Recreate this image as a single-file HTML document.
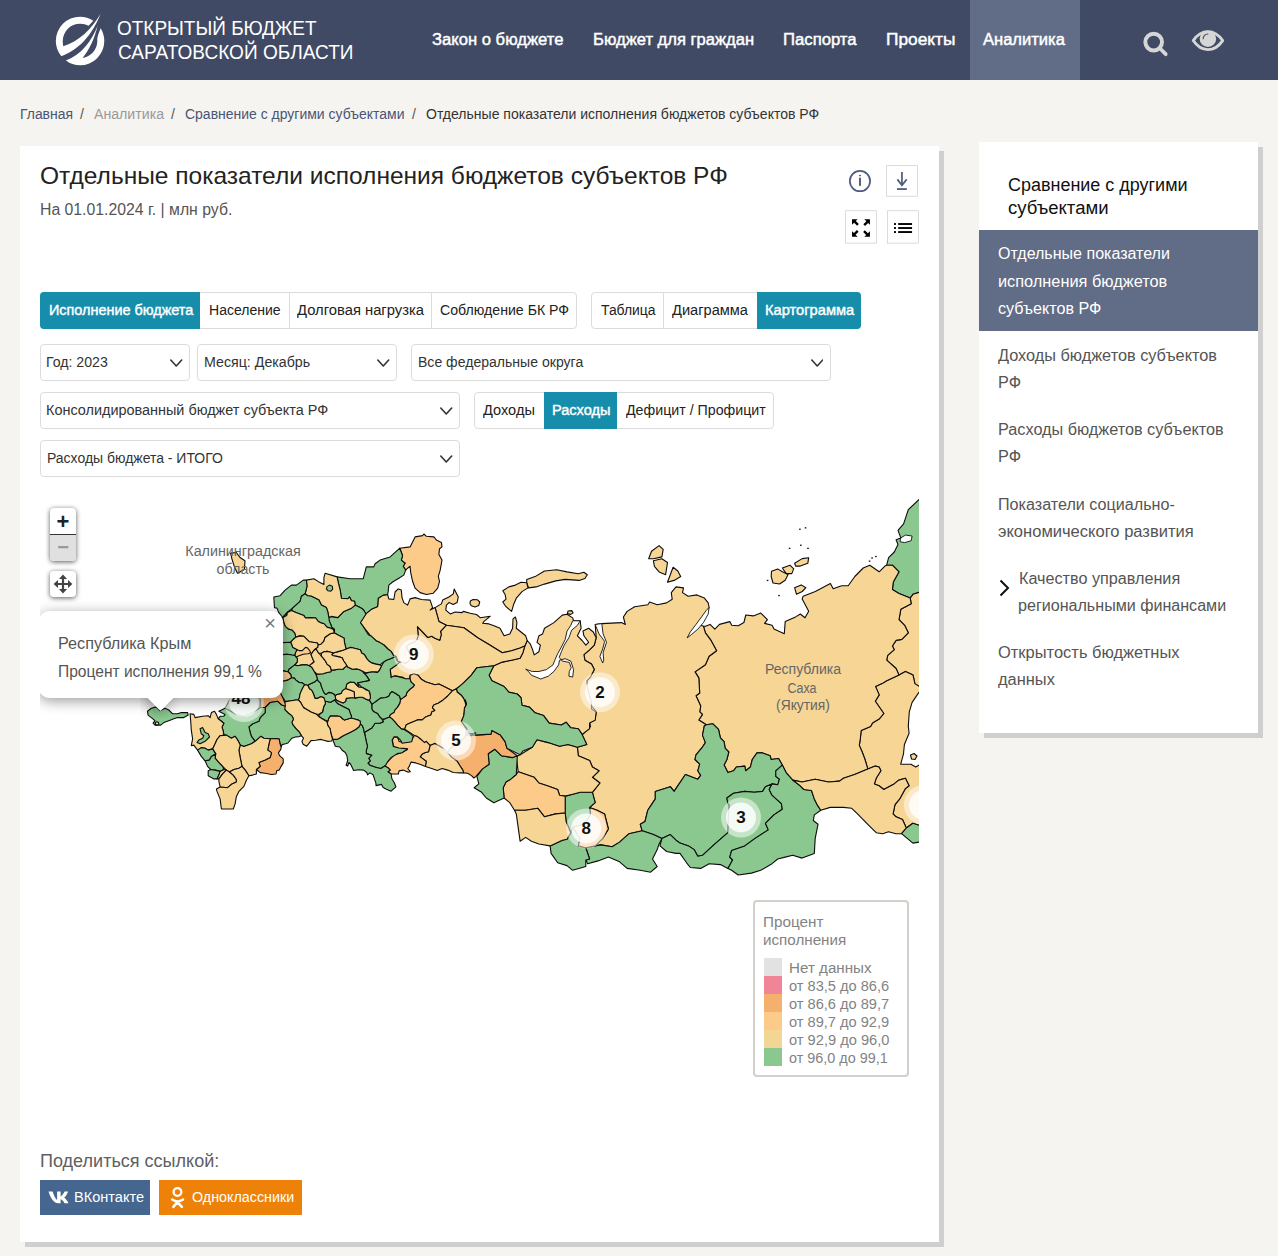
<!DOCTYPE html>
<html lang="ru"><head><meta charset="utf-8"><title>Открытый бюджет Саратовской области</title>
<style>
*{box-sizing:border-box;margin:0;padding:0}
html,body{width:1278px;height:1256px;overflow:hidden}
body{background:#f5f4f0;font-family:"Liberation Sans",sans-serif;color:#212529;position:relative}
.abs{position:absolute;white-space:nowrap}
.t{position:absolute;white-space:nowrap;line-height:1;display:block}
header{position:absolute;left:0;top:0;width:1278px;height:80px;background:#404a65}
.card{position:absolute;background:#fff;box-shadow:5px 5px 0 #cfcfcf}
.bx{position:absolute;border:1px solid #dcdcdc;background:#fff}
.on{position:absolute;background:#168eab}
</style></head><body>
<header>
<svg class="abs" style="left:48px;top:8px" width="70" height="70" viewBox="0 0 1256 1256"><g fill="#fff"><path d="M945,105 C880,260 700,700 240,865 A435,435 0 0 1 140,592 A435,435 0 0 1 575,157 A435,435 0 0 1 813,228 L730,320 A310,310 0 0 0 575,282 A310,310 0 0 0 265,592 A310,310 0 0 0 275,685 C560,600 780,380 945,105Z"/><path d="M320,940 A435,435 0 0 0 575,1027 A435,435 0 0 0 1010,592 A435,435 0 0 0 945,364 C915,440 890,500 883,560 A310,310 0 0 1 885,592 A310,310 0 0 1 620,895 C740,760 840,540 890,320 C790,580 600,850 320,940Z"/></g></svg>
<span id="t1" class="t" style="left:116.6px;top:17.6px;font-size:20.5px;color:#fff;transform:scaleX(0.9254);transform-origin:0 50%;">ОТКРЫТЫЙ БЮДЖЕТ</span>
<span id="t2" class="t" style="left:117.5px;top:41.6px;font-size:20.5px;color:#fff;transform:scaleX(0.9297);transform-origin:0 50%;">САРАТОВСКОЙ ОБЛАСТИ</span>
<div class="abs" style="left:969.5px;top:0;width:110.7px;height:80px;background:#616c86"></div>
<span id="t3" class="t" style="left:431.7px;top:32.0px;font-size:16px;color:#fff;transform:scaleX(1.0383);transform-origin:0 50%;-webkit-text-stroke:0.45px;">Закон о бюджете</span>
<span id="t4" class="t" style="left:592.7px;top:32.0px;font-size:16px;color:#fff;transform:scaleX(1.0363);transform-origin:0 50%;-webkit-text-stroke:0.45px;">Бюджет для граждан</span>
<span id="t5" class="t" style="left:783.4px;top:32.0px;font-size:16px;color:#fff;transform:scaleX(1.0432);transform-origin:0 50%;-webkit-text-stroke:0.45px;">Паспорта</span>
<span id="t6" class="t" style="left:885.6px;top:32.0px;font-size:16px;color:#fff;transform:scaleX(1.0801);transform-origin:0 50%;-webkit-text-stroke:0.45px;">Проекты</span>
<span id="t7" class="t" style="left:983.4px;top:32.0px;font-size:16px;color:#fff;transform:scaleX(1.0336);transform-origin:0 50%;-webkit-text-stroke:0.45px;">Аналитика</span>
<svg class="abs" style="left:1130px;top:15px" width="110" height="55" viewBox="0 0 1278 639"><g fill="none" stroke="#d6d6d6" stroke-linecap="round"><circle cx="275" cy="315" r="97" stroke-width="46"/><path d="M352,392 L415,455" stroke-width="44"/><path d="M735,297 C790,215 850,193 905,193 C960,193 1020,215 1077,297 C1020,380 960,402 905,402 C850,402 790,380 735,297Z" stroke-width="34" stroke-linejoin="round"/></g><circle cx="905" cy="275" r="96" fill="#d6d6d6"/><path d="M850,275 A55,55 0 0 1 905,220" fill="none" stroke="#404a65" stroke-width="13" stroke-linecap="round"/></svg>
</header>
<span id="t8" class="t" style="left:19.8px;top:107.1px;font-size:14px;color:#4a5574;transform:scaleX(0.9942);transform-origin:0 50%;">Главная</span>
<span id="t9" class="t" style="left:80.0px;top:107.1px;font-size:14px;color:#555;transform:scaleX(1.0000);transform-origin:0 50%;">/</span>
<span id="t10" class="t" style="left:93.8px;top:107.1px;font-size:14px;color:#9a9a9a;transform:scaleX(1.0104);transform-origin:0 50%;">Аналитика</span>
<span id="t11" class="t" style="left:171.0px;top:107.1px;font-size:14px;color:#555;transform:scaleX(1.0000);transform-origin:0 50%;">/</span>
<span id="t12" class="t" style="left:184.5px;top:107.1px;font-size:14px;color:#4a5574;transform:scaleX(0.9982);transform-origin:0 50%;">Сравнение с другими субъектами</span>
<span id="t13" class="t" style="left:411.9px;top:107.1px;font-size:14px;color:#555;transform:scaleX(1.0000);transform-origin:0 50%;">/</span>
<span id="t14" class="t" style="left:426.0px;top:107.1px;font-size:14px;color:#333;transform:scaleX(1.0010);transform-origin:0 50%;">Отдельные показатели исполнения бюджетов субъектов РФ</span>
<div class="card" id="main" style="left:20px;top:146px;width:919px;height:1096px">
<span id="t15" class="t" style="left:19.8px;top:17.7px;font-size:24px;color:#222;transform:scaleX(1.0215);transform-origin:0 50%;">Отдельные показатели исполнения бюджетов субъектов РФ</span>
<span id="t16" class="t" style="left:20.2px;top:55.5px;font-size:16px;color:#555;transform:scaleX(0.9866);transform-origin:0 50%;">На 01.01.2024 г. | млн руб.</span>
<svg class="abs" style="left:815px;top:9px" width="90" height="95" viewBox="0 0 1190 1256"><g fill="none" stroke="#d4d4d8" stroke-width="11"><rect x="682" y="140" width="408" height="405"/><rect x="140" y="737" width="407" height="428"/><rect x="695" y="737" width="407" height="428"/></g><g fill="none" stroke="#4f5d7e"><circle cx="330" cy="345" r="134" stroke-width="23"/><path d="M885,225 V400 M825,322 L885,400 L948,322" stroke-width="23"/><path d="M820,450 H950" stroke-width="24"/></g><g fill="#4f5d7e"><rect x="317" y="300" width="26" height="108"/><rect x="317" y="264" width="26" height="16"/></g><g fill="#000"><path d="M225,848h75l-25,25 40,40 -22,22 -40,-40 -28,28z"/><path d="M462,848v75l-25,-25 -40,40 -22,-22 40,-40 -28,-28z"/><path d="M225,1082v-75l25,25 40,-40 22,22 -40,40 28,28z"/><path d="M462,1082h-75l25,-25 -40,-40 22,-22 40,40 28,-28z"/><rect x="780" y="900" width="26" height="25"/><rect x="780" y="953" width="26" height="25"/><rect x="780" y="1006" width="26" height="25"/><rect x="835" y="900" width="184" height="25"/><rect x="835" y="953" width="184" height="25"/><rect x="835" y="1006" width="184" height="25"/></g></svg>
<div class="bx" style="left:20.0px;top:146.0px;width:537.0px;height:36.5px;border-radius:4px;"></div>
<div class="on" style="left:20.0px;top:146.0px;width:160.0px;height:36.5px;border-radius:4px 0 0 4px;"></div>
<div class="abs" style="left:269.0px;top:146.5px;width:1px;height:35.5px;background:#dcdcdc"></div>
<div class="abs" style="left:411.0px;top:146.5px;width:1px;height:35.5px;background:#dcdcdc"></div>
<span id="t17" class="t" style="left:28.8px;top:156.5px;font-size:14px;color:#fff;transform:scaleX(1.0296);transform-origin:0 50%;-webkit-text-stroke:0.39px;">Исполнение бюджета</span>
<span id="t18" class="t" style="left:189.1px;top:156.5px;font-size:14px;color:#222;transform:scaleX(1.0000);transform-origin:0 50%;">Население</span>
<span id="t19" class="t" style="left:276.8px;top:156.5px;font-size:14px;color:#222;transform:scaleX(1.0556);transform-origin:0 50%;">Долговая нагрузка</span>
<span id="t20" class="t" style="left:419.5px;top:156.5px;font-size:14px;color:#222;transform:scaleX(1.0095);transform-origin:0 50%;">Соблюдение БК РФ</span>
<div class="bx" style="left:571.0px;top:146.0px;width:270.0px;height:36.5px;border-radius:4px;"></div>
<div class="on" style="left:737.0px;top:146.0px;width:104.0px;height:36.5px;border-radius:0 4px 4px 0;"></div>
<div class="abs" style="left:643.0px;top:146.5px;width:1px;height:35.5px;background:#dcdcdc"></div>
<span id="t21" class="t" style="left:580.6px;top:156.5px;font-size:14px;color:#222;transform:scaleX(0.9944);transform-origin:0 50%;">Таблица</span>
<span id="t22" class="t" style="left:651.9px;top:156.5px;font-size:14px;color:#222;transform:scaleX(1.0433);transform-origin:0 50%;">Диаграмма</span>
<span id="t23" class="t" style="left:744.6px;top:156.5px;font-size:14px;color:#fff;transform:scaleX(1.0478);transform-origin:0 50%;-webkit-text-stroke:0.39px;">Картограмма</span>
<div class="bx" style="left:20.0px;top:198.3px;width:149.7px;height:36.4px;border-radius:4px;"></div>
<span id="t24" class="t" style="left:26.3px;top:208.8px;font-size:14px;color:#333;transform:scaleX(1.0084);transform-origin:0 50%;">Год: 2023</span>
<svg class="abs" style="left:150.2px;top:213.0px" width="12.5" height="8" viewBox="0 0 12.5 8"><path d="M0.800 1 L6.25 7 L11.7 1" fill="none" stroke="#333" stroke-width="1.6" stroke-linecap="round" stroke-linejoin="round"/></svg>
<div class="bx" style="left:177.0px;top:198.3px;width:199.5px;height:36.4px;border-radius:4px;"></div>
<span id="t25" class="t" style="left:183.8px;top:208.8px;font-size:14px;color:#333;transform:scaleX(1.0154);transform-origin:0 50%;">Месяц: Декабрь</span>
<svg class="abs" style="left:357.1px;top:213.0px" width="12.5" height="8" viewBox="0 0 12.5 8"><path d="M0.800 1 L6.25 7 L11.7 1" fill="none" stroke="#333" stroke-width="1.6" stroke-linecap="round" stroke-linejoin="round"/></svg>
<div class="bx" style="left:391.3px;top:198.3px;width:419.3px;height:36.4px;border-radius:4px;"></div>
<span id="t26" class="t" style="left:397.5px;top:208.8px;font-size:14px;color:#333;transform:scaleX(1.0037);transform-origin:0 50%;">Все федеральные округа</span>
<svg class="abs" style="left:790.8px;top:213.0px" width="12.5" height="8" viewBox="0 0 12.5 8"><path d="M0.800 1 L6.25 7 L11.7 1" fill="none" stroke="#333" stroke-width="1.6" stroke-linecap="round" stroke-linejoin="round"/></svg>
<div class="bx" style="left:20.0px;top:246.4px;width:419.6px;height:36.2px;border-radius:4px;"></div>
<span id="t27" class="t" style="left:26.3px;top:256.9px;font-size:14px;color:#333;transform:scaleX(1.0308);transform-origin:0 50%;">Консолидированный бюджет субъекта РФ</span>
<svg class="abs" style="left:420.0px;top:261.0px" width="12.5" height="8" viewBox="0 0 12.5 8"><path d="M0.800 1 L6.25 7 L11.7 1" fill="none" stroke="#333" stroke-width="1.6" stroke-linecap="round" stroke-linejoin="round"/></svg>
<div class="bx" style="left:454.3px;top:246.4px;width:299.4px;height:36.2px;border-radius:4px;"></div>
<div class="on" style="left:523.9px;top:246.4px;width:73.0px;height:36.2px;border-radius:0;"></div>
<span id="t28" class="t" style="left:462.8px;top:256.9px;font-size:14px;color:#222;transform:scaleX(1.0412);transform-origin:0 50%;">Доходы</span>
<span id="t29" class="t" style="left:531.7px;top:256.9px;font-size:14px;color:#fff;transform:scaleX(1.0403);transform-origin:0 50%;-webkit-text-stroke:0.39px;">Расходы</span>
<span id="t30" class="t" style="left:606.0px;top:256.9px;font-size:14px;color:#222;transform:scaleX(1.0146);transform-origin:0 50%;">Дефицит / Профицит</span>
<div class="bx" style="left:20.0px;top:294.2px;width:419.6px;height:36.4px;border-radius:4px;"></div>
<span id="t31" class="t" style="left:26.9px;top:304.9px;font-size:14px;color:#333;transform:scaleX(0.9977);transform-origin:0 50%;">Расходы бюджета - ИТОГО</span>
<svg class="abs" style="left:420.0px;top:309.0px" width="12.5" height="8" viewBox="0 0 12.5 8"><path d="M0.800 1 L6.25 7 L11.7 1" fill="none" stroke="#333" stroke-width="1.6" stroke-linecap="round" stroke-linejoin="round"/></svg>
<div id="map" style="position:absolute;left:20px;top:352px;width:879px;height:600px;overflow:hidden">
<svg width="879" height="600" viewBox="40 498 879 600" style="position:absolute;left:0;top:0">
<g stroke="#0c0c0c" stroke-width="1.1" stroke-linejoin="round">
<polygon points="886.7,565.2 888.6,557.7 894.3,552.0 898.0,544.5 896.1,539.8 900.8,537.9 898.0,530.4 903.6,523.8 908.3,509.7 919.1,499.4 924.3,495.6 924.3,592.4 919.1,592.4 913.0,594.3 910.2,598.1 899.0,593.4 892.4,589.6 893.3,582.1 899.0,571.8 892.4,565.2" fill="#8bc890"/>
<polygon points="900.8,537.9 905.5,535.1 912.1,536.0 911.2,540.7 904.6,542.6 899.9,541.7" fill="#fff" stroke="#111" stroke-width="0.9"/>
<polygon points="910.2,598.1 913.0,594.3 919.1,592.4 924.3,592.4 924.3,686.4 919.1,686.4 914.9,683.6 913.0,675.1 905.5,671.4 899.0,675.1 896.1,668.5 886.7,660.1 887.7,655.4 894.3,649.7 892.4,646.0 896.1,640.4 901.8,639.4 908.3,632.8 904.6,625.3 899.0,619.7 900.8,609.3 911.2,603.7" fill="#f6d595"/>
<polygon points="899.0,675.1 905.5,671.4 913.0,675.1 914.9,683.6 919.1,686.4 924.3,686.4 924.3,692.0 919.1,692.0 912.1,702.4 909.3,711.8 908.3,726.1 909.1,733.2 904.4,744.5 903.5,753.8 900.7,764.2 911.0,764.2 915.7,767.0 918.9,765.1 924.1,765.1 924.1,825.2 918.9,825.2 912.9,823.3 906.3,828.0 902.5,819.6 896.0,816.8 893.1,813.9 895.0,804.6 899.7,798.9 905.4,788.6 909.1,785.8 905.4,778.3 898.8,780.1 894.1,783.9 883.8,789.5 879.1,785.8 874.4,783.9 876.2,778.3 880.9,770.8 879.1,767.0 875.3,766.1 867.8,768.9 865.0,759.5 862.2,752.0 859.3,745.4 860.3,738.8 861.2,730.4 870.6,726.6 872.5,722.9 879.1,719.1 883.8,713.5 875.3,701.3 879.2,694.9 875.5,686.4 882.0,683.6 886.7,680.8" fill="#f6d595"/>
<polygon points="703.5,626.3 705.4,632.8 711.0,640.4 716.6,650.7 709.1,656.3 705.4,664.8 695.0,671.9 698.8,677.9 699.7,693.0 696.0,695.8 700.7,706.1 699.7,711.8 702.5,714.4 698.8,720.0 706.3,724.7 712.9,723.8 718.5,729.4 720.4,737.9 724.1,741.6 725.1,748.2 728.8,752.0 726.9,759.5 724.1,765.1 727.9,772.6 733.5,770.8 736.3,767.0 744.8,766.1 745.7,770.8 750.4,767.0 752.3,759.5 757.0,752.9 762.6,752.9 770.1,755.7 771.1,759.5 778.6,758.5 782.3,765.1 786.1,772.6 792.7,780.1 802.1,782.0 815.2,779.2 828.4,782.0 839.6,781.1 843.4,778.3 854.6,774.5 867.8,768.9 865.0,759.5 862.2,752.0 859.3,745.4 860.3,738.8 861.2,730.4 870.6,726.6 872.5,722.9 879.1,719.1 883.8,713.5 875.3,701.3 879.2,694.9 875.5,686.4 882.0,683.6 886.7,680.8 899.0,675.1 896.1,668.5 886.7,660.1 887.7,655.4 894.3,649.7 892.4,646.0 896.1,640.4 901.8,639.4 908.3,632.8 904.6,625.3 899.0,619.7 900.8,609.3 911.2,603.7 910.2,598.1 899.0,593.4 892.4,589.6 893.3,582.1 899.0,571.8 892.4,565.2 886.7,565.2 884.9,566.1 879.2,571.8 869.8,565.2 863.2,568.0 854.8,576.5 848.2,585.8 841.6,585.8 833.2,588.7 830.4,583.6 815.3,591.5 803.1,596.2 802.2,599.0 808.7,611.2 805.0,617.8 800.3,614.0 795.6,616.9 785.2,621.6 784.3,633.8 774.0,629.1 772.1,625.3 764.6,623.4 767.4,619.7 760.8,613.1 753.3,615.9 745.8,615.0 743.9,622.5 738.3,625.7 731.7,625.3 729.8,621.6 719.5,624.4 714.8,629.1 710.1,624.4 705.4,626.3" fill="#f6d595"/>
<polygon points="771.5,571.2 777.7,568.9 782.4,571.8 788.1,574.6 785.2,580.2 779.6,584.0 773.0,583.0 771.2,576.5" fill="#f6d595"/>
<polygon points="782.4,568.0 789.9,565.2 793.7,568.9 791.8,573.6 786.2,573.6" fill="#f6d595"/>
<polygon points="794.6,563.3 802.2,558.6 808.7,557.7 807.8,563.3 800.3,566.1 795.6,566.1" fill="#f6d595"/>
<polygon points="794.6,587.7 801.2,584.9 805.9,587.7 802.2,591.5 796.5,594.3" fill="#f6d595"/>
<polygon points="596.2,637.7 595.2,624.5 601.8,623.6 621.5,622.6 625.3,624.5 623.4,617.0 627.1,611.4 634.6,606.7 647.8,604.8 649.7,602.0 657.2,604.8 666.6,602.9 672.2,599.2 671.3,592.6 676.0,586.9 683.5,587.9 682.5,592.6 688.2,596.3 696.9,594.9 704.4,598.1 708.2,602.8 709.1,607.5 704.4,615.9 698.8,624.4 703.5,626.3 705.4,632.8 711.0,640.4 716.6,650.7 709.1,656.3 705.4,664.8 695.0,671.9 698.8,677.9 699.7,693.0 696.0,695.8 700.7,706.1 699.7,711.8 702.5,714.4 698.8,720.0 706.3,724.7 704.4,725.7 702.5,735.1 705.4,742.6 701.6,748.2 696.0,754.8 695.0,759.5 699.7,764.2 697.8,770.8 700.7,775.4 697.8,779.2 685.4,774.5 674.1,791.4 670.3,786.7 655.3,791.4 655.3,798.9 651.5,804.6 647.8,810.2 645.0,821.5 640.3,824.3 642.2,830.8 629.0,833.7 619.6,842.1 612.1,846.8 600.8,844.9 595.2,845.9 602.7,838.4 608.4,829.0 604.6,813.9 597.1,810.2 589.6,807.4 595.2,802.7 592.4,792.3 599.9,783.0 592.4,777.3 599.0,770.8 592.4,767.0 589.6,760.4 578.3,755.7 577.4,747.3 586.8,744.5 582.1,735.1 590.5,726.6 589.6,721.9 595.2,719.1 596.2,711.6 591.5,706.0 591.5,703.4 589.6,695.9 587.7,688.4 586.8,680.8 590.5,677.1 594.3,669.6 591.5,663.9 584.9,660.2 583.9,654.6 589.6,649.9 594.3,645.2" fill="#f6d595"/>
<polygon points="709.1,607.5 708.2,614.0 703.5,622.5 697.9,629.1 691.3,634.7 687.1,637.9 690.3,631.9 696.0,624.4 701.6,616.9 706.3,610.3" fill="#fff" stroke="#111" stroke-width="0.9"/>
<polygon points="595.2,624.5 599.0,633.9 604.6,641.4 602.7,648.9 599.9,656.4 602.7,663.0 603.7,660.2 603.1,652.7 606.5,642.3 603.1,633.9 601.8,623.6" fill="#fff" stroke="#111" stroke-width="0.9"/>
<polygon points="651.5,551.3 659.1,545.6 663.2,549.4 661.9,556.9 653.4,558.8 648.7,558.8" fill="#f6d595"/>
<polygon points="653.4,560.7 661.9,558.8 667.5,562.5 665.6,574.7 659.1,571.9 654.4,566.3" fill="#f6d595"/>
<polygon points="667.5,582.3 673.1,567.2 677.8,571.0 680.7,576.6 674.1,580.4" fill="#f6d595"/>
<polygon points="527.2,640.5 530.4,644.2 532.3,648.9 534.2,654.9 538.9,651.7 540.4,645.2 537.0,642.3 538.9,635.8 542.6,633.9 544.5,628.3 553.9,622.6 562.3,615.1 567.0,614.2 572.7,617.9 573.6,620.8 580.2,620.8 581.1,628.3 577.4,635.8 582.1,640.5 585.8,645.2 588.6,642.3 583.9,635.8 583.0,631.1 588.6,628.3 593.3,632.0 596.2,637.7 594.3,645.2 589.6,649.9 583.9,654.6 584.9,660.2 591.5,663.9 594.3,669.6 590.5,677.1 586.8,680.8 587.7,688.4 589.6,695.9 591.5,703.4 591.5,709.0 596.2,711.8 595.2,720.3 589.6,723.1 589.6,728.7 582.1,734.4 578.3,728.7 570.8,727.8 566.1,722.2 561.4,725.0 549.2,723.1 543.6,715.6 535.1,712.8 529.5,707.1 522.0,705.3 521.0,697.7 517.3,694.0 508.8,692.1 504.1,686.5 491.9,680.8 489.1,675.2 493.8,665.8 502.3,662.1 511.6,660.2 520.1,658.3 522.9,652.7 524.8,646.1" fill="#f6d595"/>
<polygon points="572.7,620.8 570.8,625.4 567.0,631.1 565.2,639.5 561.4,647.0 557.7,653.6 554.8,660.2 553.0,664.9 546.4,669.6 538.9,671.5 532.3,671.5 525.7,669.2 528.5,671.5 531.4,675.2 540.8,679.0 548.3,676.2 553.9,671.5 558.6,664.9 559.5,660.2 565.2,658.7 570.8,661.1 573.6,669.6 572.7,677.1 568.9,676.2 569.3,671.5 571.2,667.7 569.3,662.4 562.3,661.1 559.2,657.4 561.4,651.7 564.2,645.2 568.9,637.7 571.7,630.1 577.4,625.4 580.2,620.8" fill="#fff" stroke="#111" stroke-width="0.9"/>
<polygon points="568.0,611.0 571.7,610.6 573.1,612.9 570.8,614.4 567.4,613.6" fill="#f6d595"/>
<polygon points="526.7,579.4 535.1,576.6 544.5,571.0 556.7,569.7 567.0,571.9 578.3,573.8 583.9,572.3 587.3,574.7 584.9,578.5 579.2,580.4 565.2,579.4 555.8,580.9 544.5,584.1 536.1,586.9 528.5,587.9 526.7,582.3" fill="#f6d595"/>
<polygon points="502.8,590.7 508.8,586.9 515.4,585.1 521.0,582.3 526.7,582.8 528.0,587.9 522.0,591.6 516.3,598.2 513.5,604.8 511.6,611.4 506.0,606.7 502.8,602.0 506.0,599.2 505.1,594.5" fill="#f6d595"/>
<polygon points="470.3,601.0 473.1,599.5 477.3,599.7 479.7,602.0 478.8,605.4 475.0,606.9 471.3,605.7 470.0,603.5" fill="#f6d595"/>
<polygon points="435.1,607.6 441.4,603.9 442.7,600.1 448.9,597.0 453.3,593.9 454.2,589.1 458.3,597.0 457.1,602.6 453.3,604.5 448.9,602.6 446.4,605.1 445.8,610.1 450.2,613.9 455.2,612.0 462.1,612.6 463.3,611.4 470.2,613.3 476.5,614.5 480.2,617.7 485.2,617.0 490.2,616.4 484.0,621.4 482.7,623.3 489.0,623.9 494.0,625.8 500.0,628.3 504.1,635.8 509.8,633.9 512.6,628.3 513.0,618.9 515.4,617.0 516.9,622.6 516.3,628.3 521.0,632.0 525.7,635.8 527.2,640.5 524.8,646.1 520.1,648.0 511.6,650.8 502.3,652.7 490.2,645.2 477.7,637.7 463.9,627.7 446.4,625.2 438.9,621.4" fill="#f6d595"/>
<polygon points="446.4,625.2 463.9,627.7 477.7,637.7 490.2,645.2 502.3,652.7 511.6,650.8 520.1,648.0 524.8,646.1 522.9,652.7 520.1,658.3 511.6,660.2 502.3,662.1 493.8,665.8 476.9,667.7 471.3,675.2 463.8,682.7 460.4,685.6 456.4,688.8 452.4,690.8 444.5,686.8 438.9,684.0 434.9,684.8 430.1,683.2 425.4,681.7 421.4,679.3 418.2,675.3 413.8,673.7 410.2,675.3 409.4,678.9 405.5,679.3 403.1,677.3 399.9,676.9 395.1,675.7 391.1,677.7 390.7,673.7 390.3,669.3 396.7,664.9 399.5,662.1 399.9,661.8 405.5,663.3 408.6,661.0 411.0,657.0 407.8,649.8 406.3,647.4 409.4,643.8 413.4,642.6 416.6,640.3 418.2,635.5 417.4,626.7 427.8,637.5 431.7,636.3 434.9,638.3 439.7,640.3 441.3,634.7 440.5,631.5 446.1,625.1" fill="#f6d595"/>
<polygon points="387.6,594.5 388.8,598.9 393.8,599.5 395.1,592.0 398.2,588.9 401.3,590.1 402.0,597.6 403.8,602.6 407.6,605.1 410.1,598.9 415.1,597.6 421.4,599.5 430.1,600.1 432.6,607.6 430.1,610.1 435.1,607.6 438.9,621.4 446.4,625.2 440.5,631.5 441.3,634.7 439.7,640.3 434.9,638.3 431.7,636.3 427.8,637.5 417.4,626.7 418.2,635.5 416.6,640.3 413.4,642.6 409.4,643.8 406.3,647.4 407.8,649.8 411.0,657.0 408.6,661.0 405.5,663.3 399.9,661.8 399.5,662.1 397.5,661.0 395.9,656.2 393.5,655.4 391.1,651.4 387.9,649.0 384.0,645.0 380.0,642.6 376.0,640.7 370.0,635.2 360.0,622.7 365.7,613.9 371.9,608.9 377.6,606.4 378.2,598.2 383.2,595.1" fill="#f6d595"/>
<polygon points="399.8,548.2 410.1,546.9 415.1,536.9 422.6,535.6 423.9,534.0 426.4,536.3 433.9,536.9 436.4,540.0 441.4,542.5 442.0,546.9 439.5,548.8 438.9,554.4 442.0,560.1 440.2,570.1 438.3,576.3 439.5,581.3 437.7,588.2 433.3,593.2 426.4,594.5 420.1,592.6 415.1,588.2 412.6,581.3 410.7,572.6 410.1,566.3 407.6,568.2 405.7,570.1 403.2,566.3 405.1,563.2 401.3,560.1 402.6,555.7" fill="#fccb8a"/>
<polygon points="399.8,548.2 402.6,555.7 401.3,560.1 405.1,563.2 403.2,566.3 405.7,570.1 403.8,575.1 398.8,578.2 392.6,582.0 388.8,585.1 388.2,591.4 387.6,594.5 383.2,595.1 378.2,598.2 377.6,606.4 371.9,608.9 365.7,613.9 363.6,610.0 361.5,608.2 355.2,605.1 354.6,601.3 351.5,600.7 349.6,597.0 347.7,598.8 341.4,598.2 340.2,590.1 338.3,582.6 337.1,576.9 350.2,578.8 363.2,578.8 366.3,566.9 373.8,566.9 375.1,563.8 380.1,560.1 390.1,556.9" fill="#8bc890"/>
<polygon points="704.4,725.7 706.3,724.7 712.9,723.8 718.5,729.4 720.4,737.9 724.1,741.6 725.1,748.2 728.8,752.0 726.9,759.5 724.1,765.1 727.9,772.6 733.5,770.8 736.3,767.0 744.8,766.1 745.7,770.8 750.4,767.0 752.3,759.5 757.0,752.9 762.6,752.9 770.1,755.7 771.1,759.5 778.6,758.5 782.3,765.1 775.8,770.8 775.8,776.4 779.5,779.2 777.7,784.8 772.0,783.9 765.4,786.7 762.6,791.4 754.2,792.3 744.8,791.4 733.5,793.3 726.9,798.0 727.9,803.6 729.2,804.6 728.5,817.7 727.9,832.7 713.8,844.9 702.5,855.3 697.8,856.2 694.1,849.6 688.5,845.9 680.0,843.1 676.0,840.2 670.3,834.6 661.9,838.4 653.4,834.6 642.2,830.8 640.3,824.3 645.0,821.5 647.8,810.2 651.5,804.6 655.3,798.9 655.3,791.4 670.3,786.7 674.1,791.4 685.4,774.5 697.8,779.2 700.7,775.4 697.8,770.8 699.7,764.2 695.0,759.5 696.0,754.8 701.6,748.2 705.4,742.6 702.5,735.1" fill="#8bc890"/>
<polygon points="726.9,798.0 733.5,793.3 744.8,791.4 754.2,792.3 762.6,791.4 765.4,786.7 772.0,783.9 769.2,789.5 772.0,795.2 781.4,803.6 782.3,809.2 773.9,814.9 765.4,823.3 768.3,829.9 755.1,838.4 744.8,845.9 731.6,850.6 729.8,857.1 732.6,860.0 727.9,868.4 720.4,864.6 709.1,863.7 700.7,868.4 690.3,867.5 686.6,862.8 680.0,853.4 676.0,853.4 666.6,851.5 660.0,845.9 661.9,838.4 670.3,834.6 676.0,840.2 680.0,843.1 688.5,845.9 694.1,849.6 697.8,856.2 702.5,855.3 713.8,844.9 727.9,832.7 728.5,817.7 729.2,804.6 727.9,803.6" fill="#8bc890"/>
<polygon points="782.3,765.1 786.1,772.6 792.7,780.1 800.2,785.8 803.9,789.5 811.5,790.5 814.3,798.9 817.1,804.6 820.8,810.2 814.3,814.9 813.3,820.5 818.0,824.3 815.2,838.4 814.3,853.4 802.1,858.1 792.7,855.3 785.2,857.1 777.7,859.0 772.0,863.7 760.8,870.3 751.4,873.1 738.2,875.0 731.6,870.3 727.9,868.4 732.6,860.0 729.8,857.1 731.6,850.6 744.8,845.9 755.1,838.4 768.3,829.9 765.4,823.3 773.9,814.9 782.3,809.2 781.4,803.6 772.0,795.2 769.2,789.5 772.0,783.9 777.7,784.8 779.5,779.2 775.8,776.4 775.8,770.8" fill="#8bc890"/>
<polygon points="792.7,780.1 802.1,782.0 815.2,779.2 828.4,782.0 839.6,781.1 843.4,778.3 854.6,774.5 867.8,768.9 875.3,766.1 879.1,767.0 880.9,770.8 876.2,778.3 874.4,783.9 879.1,785.8 883.8,789.5 894.1,783.9 898.8,780.1 905.4,778.3 909.1,785.8 905.4,788.6 899.7,798.9 895.0,804.6 893.1,813.9 896.0,816.8 902.5,819.6 906.3,828.0 901.6,833.7 896.0,833.7 888.5,831.8 882.8,833.7 876.2,832.7 867.8,824.3 857.5,813.9 851.8,808.3 843.4,807.4 830.2,807.4 820.8,810.2 817.1,804.6 814.3,798.9 811.5,790.5 803.9,789.5 800.2,785.8" fill="#f6d595"/>
<polygon points="901.6,833.7 906.3,828.0 912.9,823.3 918.9,825.2 924.1,825.2 924.1,842.1 918.9,842.1 912.9,843.1 907.2,838.4" fill="#8bc890"/>
<polygon points="585.8,847.7 595.2,845.9 600.8,844.9 612.1,846.8 619.6,842.1 629.0,833.7 642.2,830.8 653.4,834.6 661.9,838.4 659.1,844.0 657.2,849.6 652.5,859.0 657.2,866.5 650.6,872.2 640.3,870.3 627.1,868.4 619.6,861.8 608.4,857.1 598.0,860.9 587.7,863.7 585.8,860.0 589.6,859.0" fill="#8bc890"/>
<polygon points="550.1,845.9 562.3,840.2 567.0,839.3 570.8,832.7 572.7,827.1 580.2,838.4 578.3,845.9 585.8,847.7 589.6,859.0 585.8,860.0 585.8,866.5 572.7,870.3 567.0,865.6 557.7,862.8 551.1,853.4" fill="#8bc890"/>
<polygon points="589.6,807.4 597.1,810.2 604.6,813.9 608.4,829.0 602.7,838.4 595.2,845.9 585.8,847.7 578.3,845.9 580.2,838.4 572.7,827.1 580.2,825.2 587.7,819.6 590.5,813.9" fill="#fccb8a"/>
<polygon points="565.2,796.1 572.7,794.2 580.2,792.3 592.4,792.3 595.2,802.7 589.6,807.4 590.5,813.9 587.7,819.6 580.2,825.2 572.7,827.1 570.8,832.7 566.1,821.5 565.2,813.0" fill="#8bc890"/>
<polygon points="520.1,754.8 532.3,747.3 537.0,739.8 548.3,742.6 559.5,746.3 568.0,744.5 577.4,747.3 578.3,755.7 589.6,760.4 592.4,767.0 599.0,770.8 592.4,777.3 599.9,783.0 592.4,792.3 580.2,792.3 572.7,794.2 565.2,796.1 559.5,795.2 557.7,789.5 547.3,785.8 538.9,783.0 534.2,777.3 518.2,771.7 516.3,756.7" fill="#f6d595"/>
<polygon points="518.2,771.7 534.2,777.3 538.9,783.0 547.3,785.8 557.7,789.5 559.5,795.2 565.2,796.1 565.2,813.0 555.8,813.9 544.5,816.8 537.9,808.3 525.7,810.2 514.5,810.2 509.8,802.7 504.1,798.0 503.2,787.7 506.0,782.0 510.7,779.2 516.3,774.5" fill="#fccb8a"/>
<polygon points="514.5,810.2 525.7,810.2 537.9,808.3 544.5,816.8 555.8,813.9 565.2,813.0 566.1,821.5 570.8,832.7 567.0,839.3 562.3,840.2 550.1,845.9 538.9,844.0 531.4,841.2 525.7,837.4 520.1,841.2 516.3,813.9" fill="#f6d595"/>
<polygon points="494.7,749.2 501.3,755.7 512.6,757.6 517.3,755.7 516.3,774.5 510.7,779.2 506.0,782.0 503.2,787.7 504.1,798.0 493.8,802.7 486.3,798.0 481.6,792.3 474.1,787.7 478.8,783.9 476.9,776.4 482.5,768.9 489.1,764.2 488.2,753.8" fill="#8bc890"/>
<polygon points="476.0,733.0 475.0,735.1 491.0,734.1 491.9,730.4 500.4,735.1 505.1,741.6 506.9,748.2 517.3,755.7 512.6,757.6 501.3,755.7 494.7,749.2 488.2,753.8 489.1,764.2 482.5,768.9 476.0,776.4 473.9,778.0 471.5,775.6 467.6,773.2 463.6,772.9 462.8,770.1 459.6,765.3 457.2,761.3 451.6,757.3 447.7,752.5 449.2,749.4 452.4,747.0 458.0,741.4 462.0,739.8 465.2,736.6 466.0,731.8 469.2,734.2 470.7,735.8 473.9,733.4 476.0,733.0" fill="#f6b06d"/>
<polygon points="493.8,665.8 489.1,675.2 491.9,680.8 504.1,686.5 508.8,692.1 517.3,694.0 521.0,697.7 522.0,705.3 529.5,707.1 535.1,712.8 543.6,715.6 549.2,723.1 561.4,725.0 566.1,722.2 570.8,727.8 578.3,728.7 582.1,734.4 586.8,744.5 577.4,747.3 568.0,744.5 559.5,746.3 548.3,742.6 537.0,739.8 532.3,747.3 522.9,751.0 520.1,754.8 506.9,748.2 505.1,741.6 500.4,735.1 491.9,730.4 491.0,734.1 475.0,735.1 460.0,735.1 476.0,733.0 473.9,733.4 470.7,735.8 469.2,733.4 466.0,731.1 466.8,728.7 463.6,724.7 461.2,721.5 463.6,715.9 464.4,708.0 466.4,704.0 465.2,700.0 466.0,705.5 465.2,702.4 463.6,698.4 461.2,695.2 457.2,692.0 456.4,688.8 460.4,685.6 463.8,682.7 471.3,675.2 476.9,667.7" fill="#8bc890"/>
<polygon points="413.8,673.7 418.2,675.3 421.4,679.3 425.4,681.7 430.1,683.2 434.9,684.8 438.9,684.0 444.5,686.8 452.4,690.8 447.7,696.0 442.1,700.8 438.1,703.2 434.1,704.7 432.5,707.1 434.9,710.4 431.7,711.9 430.9,715.1 425.4,717.1 422.2,719.9 417.4,719.9 415.0,721.1 410.2,723.1 406.3,724.7 404.7,729.1 401.3,728.9 397.3,724.9 394.9,721.8 391.8,718.6 389.4,717.0 390.2,714.6 394.1,712.2 394.9,709.8 397.3,707.4 399.7,703.4 400.5,699.5 402.9,697.9 406.1,695.5 406.9,692.3 410.1,689.1 413.2,686.7 414.4,685.1 410.9,681.9 410.1,678.8 410.2,675.3" fill="#fccb8a"/>
<polygon points="452.4,690.8 456.4,688.8 457.2,692.0 461.2,695.2 463.6,698.4 465.2,702.4 466.0,705.5 465.2,700.0 466.4,704.0 464.4,708.0 463.6,715.9 461.2,721.5 463.6,724.7 466.8,729.5 466.0,731.8 465.2,736.6 462.0,739.8 458.0,741.4 452.4,747.0 449.2,749.4 447.7,752.5 445.3,749.4 439.7,746.2 434.9,743.4 430.1,745.4 428.5,743.8 426.2,741.4 424.6,742.6 421.4,739.8 417.4,736.6 414.2,735.4 408.6,731.8 404.7,729.1 406.3,724.7 410.2,723.1 415.0,721.1 417.4,719.9 422.2,719.9 425.4,717.1 430.9,715.1 431.7,711.9 434.9,710.4 432.5,708.0 432.5,707.1 434.1,704.7 438.1,703.2 442.1,700.8 447.7,696.0" fill="#f6d595"/>
<polygon points="430.1,745.4 434.9,743.4 439.7,746.2 445.3,749.4 447.7,752.5 451.6,757.3 457.2,761.3 459.6,765.3 462.8,770.1 463.6,772.9 459.6,772.9 453.2,772.5 447.7,770.1 442.1,768.5 437.3,770.5 431.7,768.5 425.4,766.5 426.2,761.3 423.0,758.9 420.2,756.9 422.2,754.1 425.4,752.5 428.5,751.8 429.3,748.6" fill="#f6d595"/>
<polygon points="414.2,735.4 417.4,736.6 421.4,739.8 424.6,742.6 426.2,741.4 428.5,743.8 430.1,745.4 429.3,748.6 428.5,751.8 425.4,752.5 422.2,754.1 420.2,756.9 423.0,758.9 426.2,761.3 425.4,766.5 420.6,764.5 415.8,762.9 411.0,762.1 409.4,766.1 407.8,768.5 410.2,771.7 407.8,772.1 403.1,770.1 399.1,770.9 398.3,774.0 391.1,774.0 387.9,771.7 390.3,770.1 387.9,767.7 384.8,766.1 387.1,762.1 391.1,758.1 394.3,754.9 399.9,753.3 403.1,751.8 407.4,749.4 403.9,748.6 398.3,748.2 393.9,747.0 393.1,744.6 392.3,739.4 393.9,737.0 396.7,737.0 398.3,739.0 399.1,741.4 402.3,742.2 411.0,741.4 412.6,738.2" fill="#fccb8a"/>
<polygon points="364.7,732.5 366.3,731.3 371.8,728.1 373.4,725.7 375.0,723.3 379.8,723.3 383.4,721.8 382.2,719.4 385.4,718.6 389.4,717.0 391.8,718.6 394.9,721.8 397.3,724.9 401.3,728.9 404.5,729.7 409.3,732.9 413.2,736.1 411.7,741.7 402.1,743.2 400.5,740.1 397.3,736.9 394.1,736.9 392.1,740.1 393.3,746.4 398.9,748.0 403.7,748.4 407.7,748.8 402.1,752.8 397.3,753.6 391.0,757.6 387.8,761.6 385.4,765.5 380.8,768.5 376.0,767.7 375.0,767.1 370.3,765.5 367.9,763.2 370.3,760.8 368.7,758.4 371.8,755.2 366.3,753.6 366.3,750.4 367.5,746.4 366.3,741.7 365.5,737.7" fill="#8bc890"/>
<polygon points="332.9,739.1 336.2,739.4 339.0,738.5 342.3,736.3 345.7,734.6 349.0,732.9 352.4,731.3 356.3,729.0 359.0,726.8 360.4,724.0 362.4,725.7 363.5,728.5 364.3,732.4 365.5,737.7 366.3,741.7 367.5,746.4 366.3,750.4 366.3,753.6 371.8,755.2 368.7,758.4 370.3,760.8 367.9,763.2 370.3,765.5 375.0,767.1 380.8,768.5 384.8,766.1 387.9,767.7 390.3,770.1 387.9,771.7 391.1,774.0 391.9,778.8 394.3,782.8 395.9,786.8 391.1,791.2 386.4,789.2 383.2,787.6 381.6,784.4 376.0,785.6 376.0,783.6 374.7,779.6 373.1,774.8 369.9,772.9 367.6,774.8 366.8,772.5 363.6,770.1 358.8,769.7 353.6,770.5 350.8,764.5 348.9,762.5 347.7,766.1 346.1,765.3 347.7,760.5 346.9,755.7 345.3,752.5 342.1,750.2 339.7,747.0 335.3,746.2 334.1,743.0 332.5,739.0" fill="#8bc890"/>
<polygon points="371.8,704.2 374.2,702.6 377.4,700.3 380.6,697.9 385.4,697.5 388.6,696.3 390.2,693.1 392.1,691.5 395.7,693.5 399.7,696.3 400.5,699.5 399.7,703.4 397.3,707.4 394.9,709.8 394.1,712.2 390.2,714.6 389.4,717.0 385.4,718.6 382.2,719.4 379.8,717.0 377.4,713.4 373.4,711.4 371.8,709.0" fill="#8bc890"/>
<polygon points="395.5,656.6 391.1,658.6 386.4,660.2 384.0,661.8 381.6,665.7 379.2,670.5 377.6,672.1 377.4,672.4 371.8,671.6 366.3,673.2 363.1,672.4 366.3,675.6 369.5,680.4 363.9,681.5 357.5,682.7 361.5,687.1 366.3,689.5 369.5,691.5 370.3,695.5 369.1,699.9 371.8,704.2 374.2,702.6 377.4,700.3 380.6,697.9 385.4,697.5 388.6,696.3 390.2,693.1 392.1,691.5 395.7,693.5 399.7,696.3 400.5,699.5 402.9,697.9 406.1,695.5 406.9,692.3 410.1,689.1 413.2,686.7 414.4,685.1 410.9,681.9 410.1,678.8 405.3,678.8 402.1,677.6 397.3,676.4 394.1,676.0 391.0,677.2 390.2,670.0 391.1,677.7 390.7,673.7 390.3,669.3 396.7,664.9 399.5,662.1 397.5,661.0" fill="#8bc890"/>
<polygon points="334.5,700.1 337.3,703.4 343.4,706.8 349.0,709.5 350.1,712.9 351.5,716.2 351.2,717.9 354.6,719.0 358.5,720.1 360.2,721.2 360.4,724.0 362.4,725.7 363.5,728.5 364.3,732.4 366.3,731.3 371.8,728.1 373.4,725.7 375.0,723.3 379.8,723.3 383.4,721.8 382.2,719.4 379.8,717.0 377.4,713.4 373.4,711.4 371.8,709.0 371.8,704.2 369.1,699.9 368.5,700.3 365.7,698.9 362.4,697.3 359.0,697.3 355.1,698.1 354.6,697.8 350.7,697.8 346.2,698.4 345.7,701.2 343.4,702.9 340.1,701.7 337.3,700.6 335.6,698.9" fill="#8bc890"/>
<polygon points="327.8,721.2 328.9,717.9 330.6,715.7 334.5,715.9 337.3,715.7 340.7,716.8 342.9,719.0 344.6,720.1 347.9,719.0 351.2,717.9 354.6,719.0 358.5,720.1 360.2,721.2 360.4,724.0 359.0,726.8 356.3,729.0 352.4,731.3 349.0,732.9 345.7,734.6 342.3,736.3 339.0,738.5 336.2,739.4 332.9,739.1 331.7,735.7 330.6,731.8 330.1,728.5 328.4,726.3 327.3,724.0" fill="#fccb8a"/>
<polygon points="325.6,701.2 330.6,702.3 334.5,700.1 337.3,703.4 343.4,706.8 349.0,709.5 350.1,712.9 351.5,716.2 351.2,717.9 347.9,719.0 344.6,720.1 342.9,719.0 340.7,716.8 337.3,715.7 334.5,715.9 330.6,715.7 328.9,717.9 327.8,721.2 325.0,720.1 321.1,717.9 318.4,715.7 320.0,714.0 322.8,711.8 323.4,707.9 325.0,704.0" fill="#8bc890"/>
<polygon points="335.6,698.9 335.1,695.6 336.8,694.5 341.2,693.4 342.3,690.6 345.7,688.4 350.1,690.0 354.3,691.7 354.6,697.8 350.7,697.8 346.2,698.4 345.7,701.2 343.4,702.9 340.1,701.7 337.3,700.6" fill="#f6d595"/>
<polygon points="345.7,688.4 346.8,683.9 350.1,682.0 354.0,682.2 356.8,685.0 359.0,687.0 362.9,687.8 366.3,690.0 369.1,691.1 370.2,695.6 370.5,698.4 368.5,700.3 365.7,698.9 362.4,697.3 359.0,697.3 355.1,698.1 354.6,697.8 354.3,691.7 350.1,690.0" fill="#f6d595"/>
<polygon points="307.8,685.2 311.0,683.6 315.0,681.7 317.4,679.3 318.2,680.9 320.6,683.2 321.4,686.4 323.0,690.4 324.6,693.6 326.2,694.4 328.5,692.4 331.7,692.8 334.5,694.4 335.1,695.6 335.6,698.9 334.5,700.1 330.6,702.3 325.6,701.2 325.0,704.0 323.8,697.6 320.6,696.8 317.4,698.4 315.0,698.4 314.2,696.0 313.0,692.8 311.8,690.4 309.4,688.8" fill="#8bc890"/>
<polygon points="317.4,679.3 316.6,676.1 315.8,672.9 317.4,674.1 323.0,673.7 327.0,672.5 330.9,671.7 331.3,669.7 333.3,670.1 338.1,669.3 342.9,669.3 344.5,667.7 346.9,665.7 347.7,666.9 352.4,669.3 357.2,668.9 359.6,669.7 363.6,671.7 363.1,672.4 366.3,675.6 369.5,680.4 363.9,681.5 357.5,682.7 359.0,687.0 356.8,685.0 354.0,682.2 350.1,682.0 346.8,683.9 345.7,688.4 342.3,690.6 341.2,693.4 336.8,694.5 335.1,695.6 334.5,694.4 331.7,692.8 328.5,692.4 326.2,694.4 324.6,693.6 323.0,690.4 321.4,686.4 320.6,683.2 318.2,680.9" fill="#8bc890"/>
<polygon points="328.1,618.0 329.3,621.1 330.9,624.7 331.7,627.1 334.5,629.5 334.5,633.1 338.1,635.1 342.1,637.1 344.1,638.3 344.5,642.6 345.3,645.8 346.1,649.0 350.4,647.4 352.4,647.8 357.2,649.0 360.4,649.8 361.6,653.0 364.4,654.6 366.8,658.6 368.8,661.0 371.5,662.9 376.0,664.1 380.0,664.9 384.0,661.8 386.4,660.2 391.1,658.6 395.5,656.6 397.5,661.0 395.9,656.2 393.5,655.4 391.1,651.4 387.9,649.0 384.0,645.0 380.0,642.6 376.0,640.7 371.5,636.3 368.4,634.7 362.8,625.9 360.4,622.7 366.0,614.0 363.6,610.0 361.5,608.2 355.2,605.1 351.5,608.2 343.9,611.4 340.2,615.1 337.7,617.6 331.4,616.4 328.9,617.6" fill="#8bc890"/>
<polygon points="333.3,653.0 338.9,651.4 342.9,650.2 346.1,649.0 350.4,647.4 352.4,647.8 357.2,649.0 360.4,649.8 361.6,653.0 364.4,654.6 366.8,658.6 368.8,661.0 371.5,662.9 376.0,664.1 380.0,664.9 381.6,665.7 379.2,670.5 377.6,672.1 376.0,671.7 371.5,671.7 366.0,672.9 363.6,671.7 359.6,669.7 357.2,668.9 352.4,669.3 347.7,666.9 346.9,665.7 345.3,663.3 343.7,661.0 342.1,657.8 338.1,656.6 333.3,655.8 331.7,654.6" fill="#f6d595"/>
<polygon points="306.4,580.1 313.9,578.8 318.9,581.9 323.9,584.4 323.9,577.6 325.2,573.2 337.1,576.9 338.3,582.6 340.2,590.1 341.4,598.2 347.7,598.8 349.6,597.0 351.5,600.7 354.6,601.3 355.2,605.1 351.5,608.2 343.9,611.4 340.2,615.1 337.7,617.6 331.4,616.4 328.9,617.6 327.7,611.4 326.4,607.6 321.4,605.1 318.9,600.1 311.4,596.3 307.6,595.7 305.1,593.8 307.0,586.3" fill="#f6d595"/>
<polygon points="327.0,586.6 329.5,585.1 332.3,586.3 332.7,589.1 330.8,591.1 327.9,590.7 326.4,588.8" fill="#8bc890"/>
<polygon points="273.8,597.0 280.1,595.7 285.1,590.1 291.4,585.1 296.4,585.1 303.3,580.1 306.4,580.1 307.0,586.3 305.1,593.8 301.4,596.3 300.1,601.3 292.6,608.2 287.6,612.0 282.6,617.6 278.8,612.6 277.0,608.2 274.5,607.6" fill="#8bc890"/>
<polygon points="292.6,608.2 300.1,601.3 301.4,596.3 305.1,593.8 307.6,595.7 311.4,596.3 318.9,600.1 321.4,605.1 326.4,607.6 327.7,611.4 328.9,617.6 329.3,621.1 330.9,624.7 331.7,627.1 334.5,629.5 333.3,629.5 330.9,628.3 327.0,627.1 323.8,623.5 321.4,623.1 318.2,621.5 315.8,618.0 310.2,617.6 305.5,618.0 303.9,615.6 295.9,612.4 291.5,610.4" fill="#8bc890"/>
<polygon points="282.8,617.6 286.7,615.6 287.5,612.4 291.5,610.4 295.9,612.4 303.9,615.6 305.5,618.0 310.2,617.6 315.8,618.0 318.2,621.5 321.4,623.1 323.8,623.5 327.0,627.1 330.9,628.3 333.3,629.5 334.5,633.1 330.9,633.5 327.8,635.5 325.0,637.5 323.8,641.4 321.0,644.2 318.2,645.0 317.4,643.0 309.4,641.8 303.9,636.3 299.9,635.9 295.9,637.1 294.7,633.1 292.3,630.3 288.3,629.1 285.2,626.3 284.0,623.5 283.8,622.6 282.6,617.6 287.6,612.0" fill="#f6d595"/>
<polygon points="282.8,617.6 284.0,623.5 285.2,626.3 288.3,629.1 292.3,630.3 294.7,633.1 295.9,637.1 293.1,639.5 290.7,642.2 282.8,642.6 276.0,642.6 276.0,617.6" fill="#8bc890"/>
<polygon points="290.7,642.2 293.1,639.5 295.9,637.1 299.9,635.9 303.9,636.3 309.4,641.8 317.4,643.0 318.2,645.0 317.8,647.4 315.4,649.0 313.4,651.0 311.8,653.4 311.0,654.6 313.0,659.4 314.2,661.8 311.8,663.7 309.4,665.7 307.1,664.9 302.3,664.9 297.5,665.7 294.7,664.9 297.1,662.1 297.5,658.6 295.9,657.0 294.7,655.4 295.5,652.6 297.1,649.8 292.7,647.4" fill="#f6d595"/>
<polygon points="295.5,652.6 297.1,649.8 299.1,650.6 302.3,650.6 305.5,647.4 307.4,647.8 309.8,650.6 310.6,653.0 307.8,653.8 303.1,654.2 299.1,655.8 295.9,657.0 294.7,655.4" fill="#fccb8a"/>
<polygon points="276.0,642.6 282.8,642.6 290.7,642.2 292.7,647.4 297.1,649.8 295.5,652.6 294.7,655.4 291.9,655.0 287.5,654.2 282.8,654.6 276.0,654.6" fill="#8bc890"/>
<polygon points="276.0,654.6 282.8,654.6 287.5,654.2 291.9,655.0 294.7,655.4 295.9,657.0 297.5,658.6 297.1,662.1 294.7,664.9 293.1,666.1 289.1,669.3 287.9,671.7 282.8,670.9 276.0,670.9" fill="#8bc890"/>
<polygon points="289.1,669.3 293.1,666.1 294.7,664.9 297.5,665.7 302.3,664.9 307.1,664.9 309.4,665.7 311.8,667.3 314.2,671.3 316.6,676.1 317.4,679.3 315.0,681.7 311.0,683.6 307.8,685.2 304.7,684.8 302.3,682.9 299.1,682.5 295.9,680.1 294.3,678.1 291.5,677.7 290.7,674.5 287.9,671.7" fill="#8bc890"/>
<polygon points="276.0,670.9 282.8,670.9 287.9,671.7 290.7,674.5 291.5,677.7 287.9,680.1 282.8,681.3 276.0,681.3" fill="#fccb8a"/>
<polygon points="276.0,681.3 282.8,681.3 287.9,680.1 291.5,677.7 294.3,678.1 295.9,680.1 299.1,682.5 302.3,682.9 304.7,684.8 303.1,687.2 301.5,690.4 299.9,694.4 299.5,697.6 298.3,700.0 295.9,700.0 291.1,700.8 285.6,701.6 282.8,697.6 279.2,694.4 276.0,694.4" fill="#8bc890"/>
<polygon points="311.0,654.6 311.8,653.4 313.4,651.0 315.4,649.0 316.6,649.8 318.6,653.0 321.4,656.2 323.0,657.8 325.4,661.0 327.0,664.1 330.1,666.5 331.3,669.7 330.9,671.7 327.0,672.5 323.0,673.7 317.4,674.1 315.8,672.9 314.2,671.3 311.8,667.3 309.4,665.7 311.8,663.7 314.2,661.8 313.0,659.4" fill="#f6d595"/>
<polygon points="318.2,645.0 321.0,644.2 323.8,641.4 325.0,637.5 327.8,635.5 330.9,633.5 334.5,633.1 338.1,635.1 342.1,637.1 344.1,638.3 344.5,642.6 345.3,645.8 346.1,649.0 342.9,650.2 338.9,651.4 333.3,653.0 330.9,652.2 327.0,651.4 323.8,651.8 321.4,653.4 318.6,653.0 316.6,649.8 315.4,649.0 317.8,647.4" fill="#f6d595"/>
<polygon points="321.4,656.2 321.4,653.4 323.8,651.8 327.0,651.4 330.9,652.2 333.3,653.0 331.7,654.6 333.3,655.8 338.1,656.6 342.1,657.8 343.7,661.0 345.3,663.3 346.9,665.7 344.5,667.7 342.9,669.3 338.1,669.3 333.3,670.1 331.3,669.7 330.1,666.5 327.0,664.1 325.4,661.0 323.0,657.8" fill="#f6d595"/>
<polygon points="304.7,684.8 307.8,685.2 309.4,688.8 311.8,690.4 313.0,692.8 314.2,696.0 315.0,698.4 317.4,698.4 320.6,696.8 323.8,697.6 325.0,700.8 325.4,703.9 323.8,706.3 323.0,709.6 322.2,712.3 319.0,714.3 316.6,714.3 311.0,711.9 305.5,708.8 302.3,706.4 302.3,705.5 300.7,702.4 298.3,700.0 299.5,697.6 299.9,694.4 301.5,690.4 303.1,687.2" fill="#f6d595"/>
<polygon points="285.6,701.6 291.1,700.8 295.9,700.0 298.3,700.0 300.7,702.4 302.3,705.5 303.9,707.9 305.5,708.8 311.0,711.9 316.6,714.3 319.0,716.7 323.8,719.9 327.0,721.9 327.8,725.5 330.1,728.7 330.9,733.4 332.5,739.0 331.7,741.0 327.8,741.4 323.8,740.2 320.6,739.4 315.8,740.2 311.0,740.6 308.6,743.8 306.7,746.2 303.1,744.2 301.9,741.4 303.5,738.2 301.5,735.8 299.1,731.8 295.9,728.7 292.7,724.7 291.9,722.3 293.5,719.1 291.9,715.9 287.9,712.7 284.8,709.6 284.0,706.4 284.8,702.4" fill="#f6d595"/>
<polygon points="256.4,692.5 277.7,687.5 282.7,697.5 285.2,703.8 285.2,706.3 281.5,705.0 277.7,701.3 270.2,702.5 265.2,707.5 260.2,707.5 257.7,705.0" fill="#f6b06d"/>
<polygon points="265.2,707.5 270.2,702.5 277.7,701.3 281.5,705.0 285.2,706.3 284.8,709.6 287.9,712.7 291.9,715.9 293.5,719.1 291.9,722.3 292.7,724.7 295.9,728.7 299.1,731.8 301.5,735.8 299.1,736.6 295.1,737.0 291.9,738.2 287.9,743.0 285.6,743.8 282.0,744.6 281.2,747.0 280.0,743.8 279.2,739.0 276.0,738.6 270.2,738.8 263.9,738.2 260.8,736.3 255.2,741.3 251.4,736.3 250.2,732.6 248.9,726.9 252.7,723.8 258.9,721.3 260.2,717.6 265.2,712.6" fill="#8bc890"/>
<polygon points="270.2,738.8 276.0,738.6 279.2,739.0 280.0,743.8 281.2,747.0 280.8,749.4 278.4,752.9 279.6,755.7 283.2,758.9 283.2,762.9 280.8,766.9 279.2,770.1 276.8,770.5 276.0,774.0 271.5,774.5 265.2,773.3 260.2,772.6 256.4,769.5 260.2,766.4 258.9,762.6 265.2,760.1 270.2,757.6 271.5,752.6 267.7,750.1 269.0,743.8" fill="#f6b06d"/>
<polygon points="218.9,711.3 225.1,708.2 230.1,710.7 235.1,713.8 243.9,716.3 252.7,712.6 260.2,707.5 265.2,707.5 265.2,712.6 260.2,717.6 258.9,721.3 252.7,723.8 248.9,726.9 250.2,732.6 251.4,736.3 255.2,741.3 251.4,743.8 243.9,746.4 240.2,745.1 237.7,740.1 235.1,736.3 231.4,738.2 226.4,735.1 223.9,735.1 223.3,731.3 222.0,726.9 223.9,723.2 221.4,721.3 218.2,718.8 220.1,716.3 223.9,716.3 225.1,714.4" fill="#8bc890"/>
<polygon points="225.1,708.2 230.1,698.8 260.2,698.8 260.2,707.5 252.7,712.6 243.9,716.3 235.1,713.8 230.1,710.7" fill="#8bc890"/>
<polygon points="240.2,745.1 243.9,746.4 251.4,743.8 255.2,741.3 260.8,736.3 263.9,738.2 270.2,738.8 269.0,743.8 267.7,750.1 271.5,752.6 270.2,757.6 265.2,760.1 258.9,762.6 260.2,766.4 256.4,769.5 256.4,773.9 252.7,775.1 248.9,775.8 245.2,770.1 242.0,766.4 240.2,757.6 238.9,750.1" fill="#f6d595"/>
<polygon points="190.1,713.8 193.8,714.4 195.1,717.6 202.6,716.3 208.2,715.7 210.1,717.6 211.4,712.6 214.5,711.3 216.4,714.4 218.2,718.8 221.4,721.3 223.9,723.2 222.0,726.9 223.3,731.3 223.9,735.1 220.1,735.7 217.0,739.5 215.1,743.8 212.6,748.9 208.2,750.1 205.1,748.2 201.3,747.6 197.6,750.1 193.8,745.1 191.3,745.7 192.6,738.8 191.3,730.1 190.7,721.3" fill="#f6d595"/>
<polygon points="200.1,728.8 202.6,727.6 205.1,732.6 208.2,733.8 209.5,737.0 205.1,741.3 200.1,743.8 197.0,742.6 198.8,740.1 202.6,738.2 203.8,735.7 201.3,733.8" fill="#8bc890"/>
<polygon points="217.0,739.5 220.1,735.7 226.4,735.1 231.4,738.2 235.1,736.3 237.7,740.1 240.2,745.1 238.9,750.1 240.2,757.6 242.0,766.4 238.9,768.3 233.9,769.5 229.5,772.0 226.4,770.1 222.6,766.4 218.9,762.6 215.1,758.2 215.7,753.9 212.6,748.9 215.1,743.8" fill="#f6d595"/>
<polygon points="197.6,750.1 201.3,747.6 205.1,748.2 208.2,750.1 212.6,748.9 215.7,753.9 211.4,756.4 209.5,760.1 205.1,760.8 201.3,756.4" fill="#8bc890"/>
<polygon points="205.1,760.8 209.5,760.1 211.4,756.4 215.7,753.9 215.1,758.2 218.9,762.6 222.6,766.4 223.9,769.5 220.1,771.4 215.1,770.1 210.7,769.5 207.6,766.4" fill="#8bc890"/>
<polygon points="208.2,770.8 210.7,769.5 215.1,770.1 220.1,771.4 218.9,775.1 217.0,778.9 213.9,778.9 208.2,775.8" fill="#8bc890"/>
<polygon points="220.1,771.4 223.9,769.5 226.4,770.1 222.6,773.9 218.9,778.9 217.0,778.9 218.9,775.1" fill="#f6d595"/>
<polygon points="222.6,773.9 226.4,770.1 229.5,772.0 233.3,775.1 236.4,779.5 236.4,782.0 232.0,783.9 227.6,787.7 220.1,787.0 218.9,781.4 218.9,778.9" fill="#f6d595"/>
<polygon points="229.5,772.0 233.9,769.5 238.9,768.3 242.0,766.4 245.2,770.1 248.9,775.8 246.4,780.2 243.9,786.4 238.9,791.4 236.4,796.4 235.1,803.9 233.3,809.0 221.4,809.0 220.1,798.9 217.0,791.4 216.4,788.9 220.1,787.0 227.6,787.7 232.0,783.9 236.4,782.0 236.4,779.5 233.3,775.1" fill="#f6d595"/>
<polygon points="147.5,711.3 151.3,708.2 156.3,706.9 160.0,710.7 165.0,708.2 168.8,710.0 172.6,713.8 177.6,713.8 181.3,712.6 187.6,712.6 188.2,715.1 183.8,717.6 177.6,717.6 173.8,718.8 168.8,720.7 163.8,722.6 160.7,725.1 155.0,725.1 153.1,723.2 155.0,720.7 151.3,717.6 148.1,715.1" fill="#8bc890"/>
<polygon points="155.3,722.6 156.9,721.8 158.5,722.6 158.8,724.1 157.3,725.1 155.6,724.6" fill="#f6d595"/>
<polygon points="230.6,553.1 236.3,552.5 240.0,557.5 245.0,560.7 244.4,569.4 237.5,573.2 234.4,566.9 231.9,558.8" fill="#f6d595"/>
<rect x="799.1" y="528.6" width="1.6" height="1.300" fill="#111" stroke="none"/><rect x="804.7" y="527.2" width="1.6" height="1.300" fill="#111" stroke="none"/><rect x="788.8" y="547.7" width="1.6" height="1.300" fill="#111" stroke="none"/><rect x="800.0" y="544.6" width="1.6" height="1.300" fill="#111" stroke="none"/><rect x="807.2" y="547.7" width="1.6" height="1.300" fill="#111" stroke="none"/><rect x="778.2" y="594.9" width="1.6" height="1.300" fill="#111" stroke="none"/><rect x="766.8" y="579.8" width="1.6" height="1.300" fill="#111" stroke="none"/><rect x="868.8" y="560.5" width="1.6" height="1.300" fill="#111" stroke="none"/><rect x="871.3" y="557.3" width="1.6" height="1.300" fill="#111" stroke="none"/><rect x="875.1" y="555.9" width="1.6" height="1.300" fill="#111" stroke="none"/><polygon points="910.5,755 914,753.5 917,756 915,759.500 911.500,759" fill="#f6d595"/>
</g>
<g id="markers">
<circle cx="413.8" cy="654.6" r="20" fill="#fff" fill-opacity=".5"/><circle cx="413.8" cy="654.6" r="15" fill="#fff" fill-opacity=".8"/>
<circle cx="600" cy="692.2" r="20" fill="#fff" fill-opacity=".5"/><circle cx="600" cy="692.2" r="15" fill="#fff" fill-opacity=".8"/>
<circle cx="456" cy="740.6" r="20" fill="#fff" fill-opacity=".5"/><circle cx="456" cy="740.6" r="15" fill="#fff" fill-opacity=".8"/>
<circle cx="586.2" cy="828.4" r="20" fill="#fff" fill-opacity=".5"/><circle cx="586.2" cy="828.4" r="15" fill="#fff" fill-opacity=".8"/>
<circle cx="741" cy="817.5" r="20" fill="#fff" fill-opacity=".5"/><circle cx="741" cy="817.5" r="15" fill="#fff" fill-opacity=".8"/>
<circle cx="244" cy="702" r="20" fill="#fff" fill-opacity=".5"/><circle cx="244" cy="702" r="15" fill="#fff" fill-opacity=".8"/>
<circle cx="924" cy="805" r="20" fill="#fff" fill-opacity=".5"/><circle cx="924" cy="805" r="15" fill="#fff" fill-opacity=".8"/>
</g></svg>
<span id="t32" class="t" style="left:373.8px;top:148.2px;font-size:17px;color:#111;transform:translateX(-50%) scaleX(1.0000);transform-origin:50% 50%;font-weight:bold;">9</span>
<span id="t33" class="t" style="left:560.0px;top:185.8px;font-size:17px;color:#111;transform:translateX(-50%) scaleX(1.0000);transform-origin:50% 50%;font-weight:bold;">2</span>
<span id="t34" class="t" style="left:416.0px;top:234.2px;font-size:17px;color:#111;transform:translateX(-50%) scaleX(1.0000);transform-origin:50% 50%;font-weight:bold;">5</span>
<span id="t35" class="t" style="left:546.2px;top:322.0px;font-size:17px;color:#111;transform:translateX(-50%) scaleX(1.0000);transform-origin:50% 50%;font-weight:bold;">8</span>
<span id="t36" class="t" style="left:701.0px;top:311.1px;font-size:17px;color:#111;transform:translateX(-50%) scaleX(1.0000);transform-origin:50% 50%;font-weight:bold;">3</span>
<span id="t37" class="t" style="left:201.0px;top:191.6px;font-size:17px;color:#111;transform:translateX(-50%) scaleX(1.0000);transform-origin:50% 50%;font-weight:bold;">48</span>
<span id="t38" class="t" style="left:202.6px;top:46.0px;font-size:14px;color:#666;transform:translateX(-50%) scaleX(1.0224);transform-origin:50% 50%;">Калининградская</span>
<span id="t39" class="t" style="left:202.6px;top:63.6px;font-size:14px;color:#666;transform:translateX(-50%) scaleX(1.0178);transform-origin:50% 50%;">область</span>
<span id="t40" class="t" style="left:763.4px;top:164.4px;font-size:14px;color:#666;transform:translateX(-50%) scaleX(1.0027);transform-origin:50% 50%;">Республика</span>
<span id="t41" class="t" style="left:762.3px;top:182.8px;font-size:14px;color:#666;transform:translateX(-50%) scaleX(0.8892);transform-origin:50% 50%;">Саха</span>
<span id="t42" class="t" style="left:763.2px;top:200.4px;font-size:14px;color:#666;transform:translateX(-50%) scaleX(0.9869);transform-origin:50% 50%;">(Якутия)</span>
<div style="position:absolute;left:10px;top:10px;width:26px;height:53px;border-radius:4px;box-shadow:0 1px 5px rgba(0,0,0,.65);background:#fff;overflow:hidden">
<div style="height:27px;border-bottom:1px solid #333;text-align:center;font:bold 22px/27px 'Liberation Sans',sans-serif;color:#222">+</div>
<div style="height:26px;background:#e0e0e0;text-align:center;font:bold 20px/24px 'Liberation Sans',sans-serif;color:#999">&minus;</div>
</div>
<div style="position:absolute;left:10px;top:73px;width:26px;height:26px;border-radius:4px;box-shadow:0 1px 5px rgba(0,0,0,.65);background:#fff">
<svg width="26" height="26" viewBox="0 0 26 26"><g fill="none" stroke="#444" stroke-width="2.2"><path d="M13 6v14M6 13h14"/></g><g fill="#444"><path d="M13 3.600l4 4.400h-8zM13 22.400l4-4.400h-8zM3.600 13l4.400-4v8zM22.400 13l-4.400-4v8z"/></g></svg>
</div>
<div id="popup" style="position:absolute;left:-2px;top:113px;width:244.800px;height:86.500px;background:#fff;border-radius:12px;box-shadow:0 3px 14px rgba(0,0,0,.4)">
<span id="t43" class="t" style="left:19.7px;top:25.0px;font-size:16px;color:#555;transform:scaleX(1.0107);transform-origin:0 50%;">Республика Крым</span>
<span id="t44" class="t" style="left:19.7px;top:52.7px;font-size:16px;color:#555;transform:scaleX(0.9726);transform-origin:0 50%;">Процент исполнения 99,1 %</span>
<span class="t" style="left:226.2px;top:2.1px;font-size:20px;color:#7a7a7a">&times;</span>
<div style="position:absolute;left:102px;top:86.500px;width:40px;height:20px;overflow:hidden"><div style="width:19px;height:19px;background:#fff;transform:rotate(45deg);margin:-9.500px auto 0;box-shadow:0 3px 14px rgba(0,0,0,.4)"></div></div>
</div>
<div id="legend" style="position:absolute;left:712.7px;top:402.3px;width:156px;height:177.200px;background:#fff;border:2px solid #d3cfca;border-radius:4px">
<span id="t45" class="t" style="left:8.2px;top:13.1px;font-size:14px;color:#838383;transform:scaleX(1.0896);transform-origin:0 50%;">Процент</span>
<span id="t46" class="t" style="left:8.2px;top:31.0px;font-size:14px;color:#838383;transform:scaleX(1.0847);transform-origin:0 50%;">исполнения</span>
<div class="abs" style="left:9.0px;top:56.1px;width:18.600px;height:18px;background:#e2e2e2"></div>
<div class="abs" style="left:9.0px;top:74.0px;width:18.600px;height:18px;background:#ef8596"></div>
<div class="abs" style="left:9.0px;top:91.9px;width:18.600px;height:18px;background:#f6b06d"></div>
<div class="abs" style="left:9.0px;top:109.8px;width:18.600px;height:18px;background:#fccb8a"></div>
<div class="abs" style="left:9.0px;top:127.7px;width:18.600px;height:18px;background:#f3d595"></div>
<div class="abs" style="left:9.0px;top:145.6px;width:18.600px;height:18px;background:#8bc890"></div>
<span id="t47" class="t" style="left:34.3px;top:58.6px;font-size:14px;color:#838383;transform:scaleX(1.0831);transform-origin:0 50%;">Нет данных</span>
<span id="t48" class="t" style="left:34.4px;top:76.6px;font-size:14px;color:#838383;transform:scaleX(1.0433);transform-origin:0 50%;">от 83,5 до 86,6</span>
<span id="t49" class="t" style="left:34.4px;top:94.5px;font-size:14px;color:#838383;transform:scaleX(1.0433);transform-origin:0 50%;">от 86,6 до 89,7</span>
<span id="t50" class="t" style="left:34.4px;top:112.5px;font-size:14px;color:#838383;transform:scaleX(1.0433);transform-origin:0 50%;">от 89,7 до 92,9</span>
<span id="t51" class="t" style="left:34.4px;top:130.4px;font-size:14px;color:#838383;transform:scaleX(1.0465);transform-origin:0 50%;">от 92,9 до 96,0</span>
<span id="t52" class="t" style="left:34.4px;top:148.3px;font-size:14px;color:#838383;transform:scaleX(1.0275);transform-origin:0 50%;">от 96,0 до 99,1</span>
</div>
</div>
<span id="t53" class="t" style="left:19.8px;top:1005.8px;font-size:18px;color:#606060;transform:scaleX(1.0017);transform-origin:0 50%;">Поделиться ссылкой:</span>
<div class="abs" style="left:20.0px;top:1034.0px;width:110px;height:34.500px;background:#45668e"></div>
<div class="abs" style="left:139.0px;top:1034.0px;width:143px;height:34.500px;background:#ee8208"></div>
<svg class="abs" style="left:16px;top:1030px" width="160" height="44" viewBox="0 0 1278 351"><path fill="#fff" transform="translate(100,0) scale(0.78,1) translate(-100,0)" d="M100,123 h42 c18,42 33,62 46,68 v-68 h36 v40 c14,-6 28,-22 40,-40 h36 c-8,22 -27,41 -40,49 c15,9 35,28 45,45 h-41 c-10,-14 -24,-27 -40,-31 v31 h-23 c-45,0 -80,-40 -101,-94z"/><g fill="none" stroke="#fff" stroke-linecap="round"><circle cx="1130" cy="128" r="31" stroke-width="18"/><path d="M1088,188 Q1130,218 1174,188" stroke-width="20"/><path d="M1130,208 L1097,246 M1130,208 L1165,246" stroke-width="20"/></g></svg>
<span id="t54" class="t" style="left:53.5px;top:1044.1px;font-size:14px;color:#fff;transform:scaleX(1.0396);transform-origin:0 50%;">ВКонтакте</span>
<span id="t55" class="t" style="left:171.8px;top:1044.1px;font-size:14px;color:#fff;transform:scaleX(1.0223);transform-origin:0 50%;">Одноклассники</span>
</div>
<div class="card" id="side" style="left:979px;top:142px;width:279px;height:591px">
<span id="t56" class="t" style="left:28.5px;top:33.9px;font-size:18px;color:#111;transform:scaleX(0.9978);transform-origin:0 50%;">Сравнение с другими</span>
<span id="t57" class="t" style="left:28.5px;top:57.4px;font-size:18px;color:#111;transform:scaleX(1.0281);transform-origin:0 50%;">субъектами</span>
<div class="abs" style="left:0;top:88.1px;width:279px;height:100.600px;background:#616c86"></div>
<span id="t58" class="t" style="left:18.9px;top:104.4px;font-size:16px;color:#fff;transform:scaleX(1.0018);transform-origin:0 50%;">Отдельные показатели</span>
<span id="t59" class="t" style="left:18.9px;top:131.7px;font-size:16px;color:#fff;transform:scaleX(1.0201);transform-origin:0 50%;">исполнения бюджетов</span>
<span id="t60" class="t" style="left:18.9px;top:158.5px;font-size:16px;color:#fff;transform:scaleX(1.0079);transform-origin:0 50%;">субъектов РФ</span>
<span id="t61" class="t" style="left:18.9px;top:205.5px;font-size:16px;color:#555;transform:scaleX(1.0183);transform-origin:0 50%;">Доходы бюджетов субъектов</span>
<span id="t62" class="t" style="left:18.9px;top:232.5px;font-size:16px;color:#555;transform:scaleX(1.0140);transform-origin:0 50%;">РФ</span>
<span id="t63" class="t" style="left:18.9px;top:280.2px;font-size:16px;color:#555;transform:scaleX(1.0150);transform-origin:0 50%;">Расходы бюджетов субъектов</span>
<span id="t64" class="t" style="left:18.9px;top:306.9px;font-size:16px;color:#555;transform:scaleX(1.0140);transform-origin:0 50%;">РФ</span>
<span id="t65" class="t" style="left:18.9px;top:355.1px;font-size:16px;color:#555;transform:scaleX(1.0081);transform-origin:0 50%;">Показатели социально-</span>
<span id="t66" class="t" style="left:18.9px;top:381.8px;font-size:16px;color:#555;transform:scaleX(1.0336);transform-origin:0 50%;">экономического развития</span>
<span id="t67" class="t" style="left:40.1px;top:429.0px;font-size:16px;color:#555;transform:scaleX(1.0114);transform-origin:0 50%;">Качество управления</span>
<span id="t68" class="t" style="left:39.3px;top:455.7px;font-size:16px;color:#555;transform:scaleX(1.0049);transform-origin:0 50%;">региональными финансами</span>
<span id="t69" class="t" style="left:18.9px;top:502.8px;font-size:16px;color:#555;transform:scaleX(1.0298);transform-origin:0 50%;">Открытость бюджетных</span>
<span id="t70" class="t" style="left:18.9px;top:530.4px;font-size:16px;color:#555;transform:scaleX(1.0262);transform-origin:0 50%;">данных</span>
<svg class="abs" style="left:19.7px;top:436.5px" width="12" height="18" viewBox="0 0 12 18"><path d="M1.500 1.500 L9 9 L1.500 16.500" fill="none" stroke="#111" stroke-width="2"/></svg>
</div>
</body></html>
